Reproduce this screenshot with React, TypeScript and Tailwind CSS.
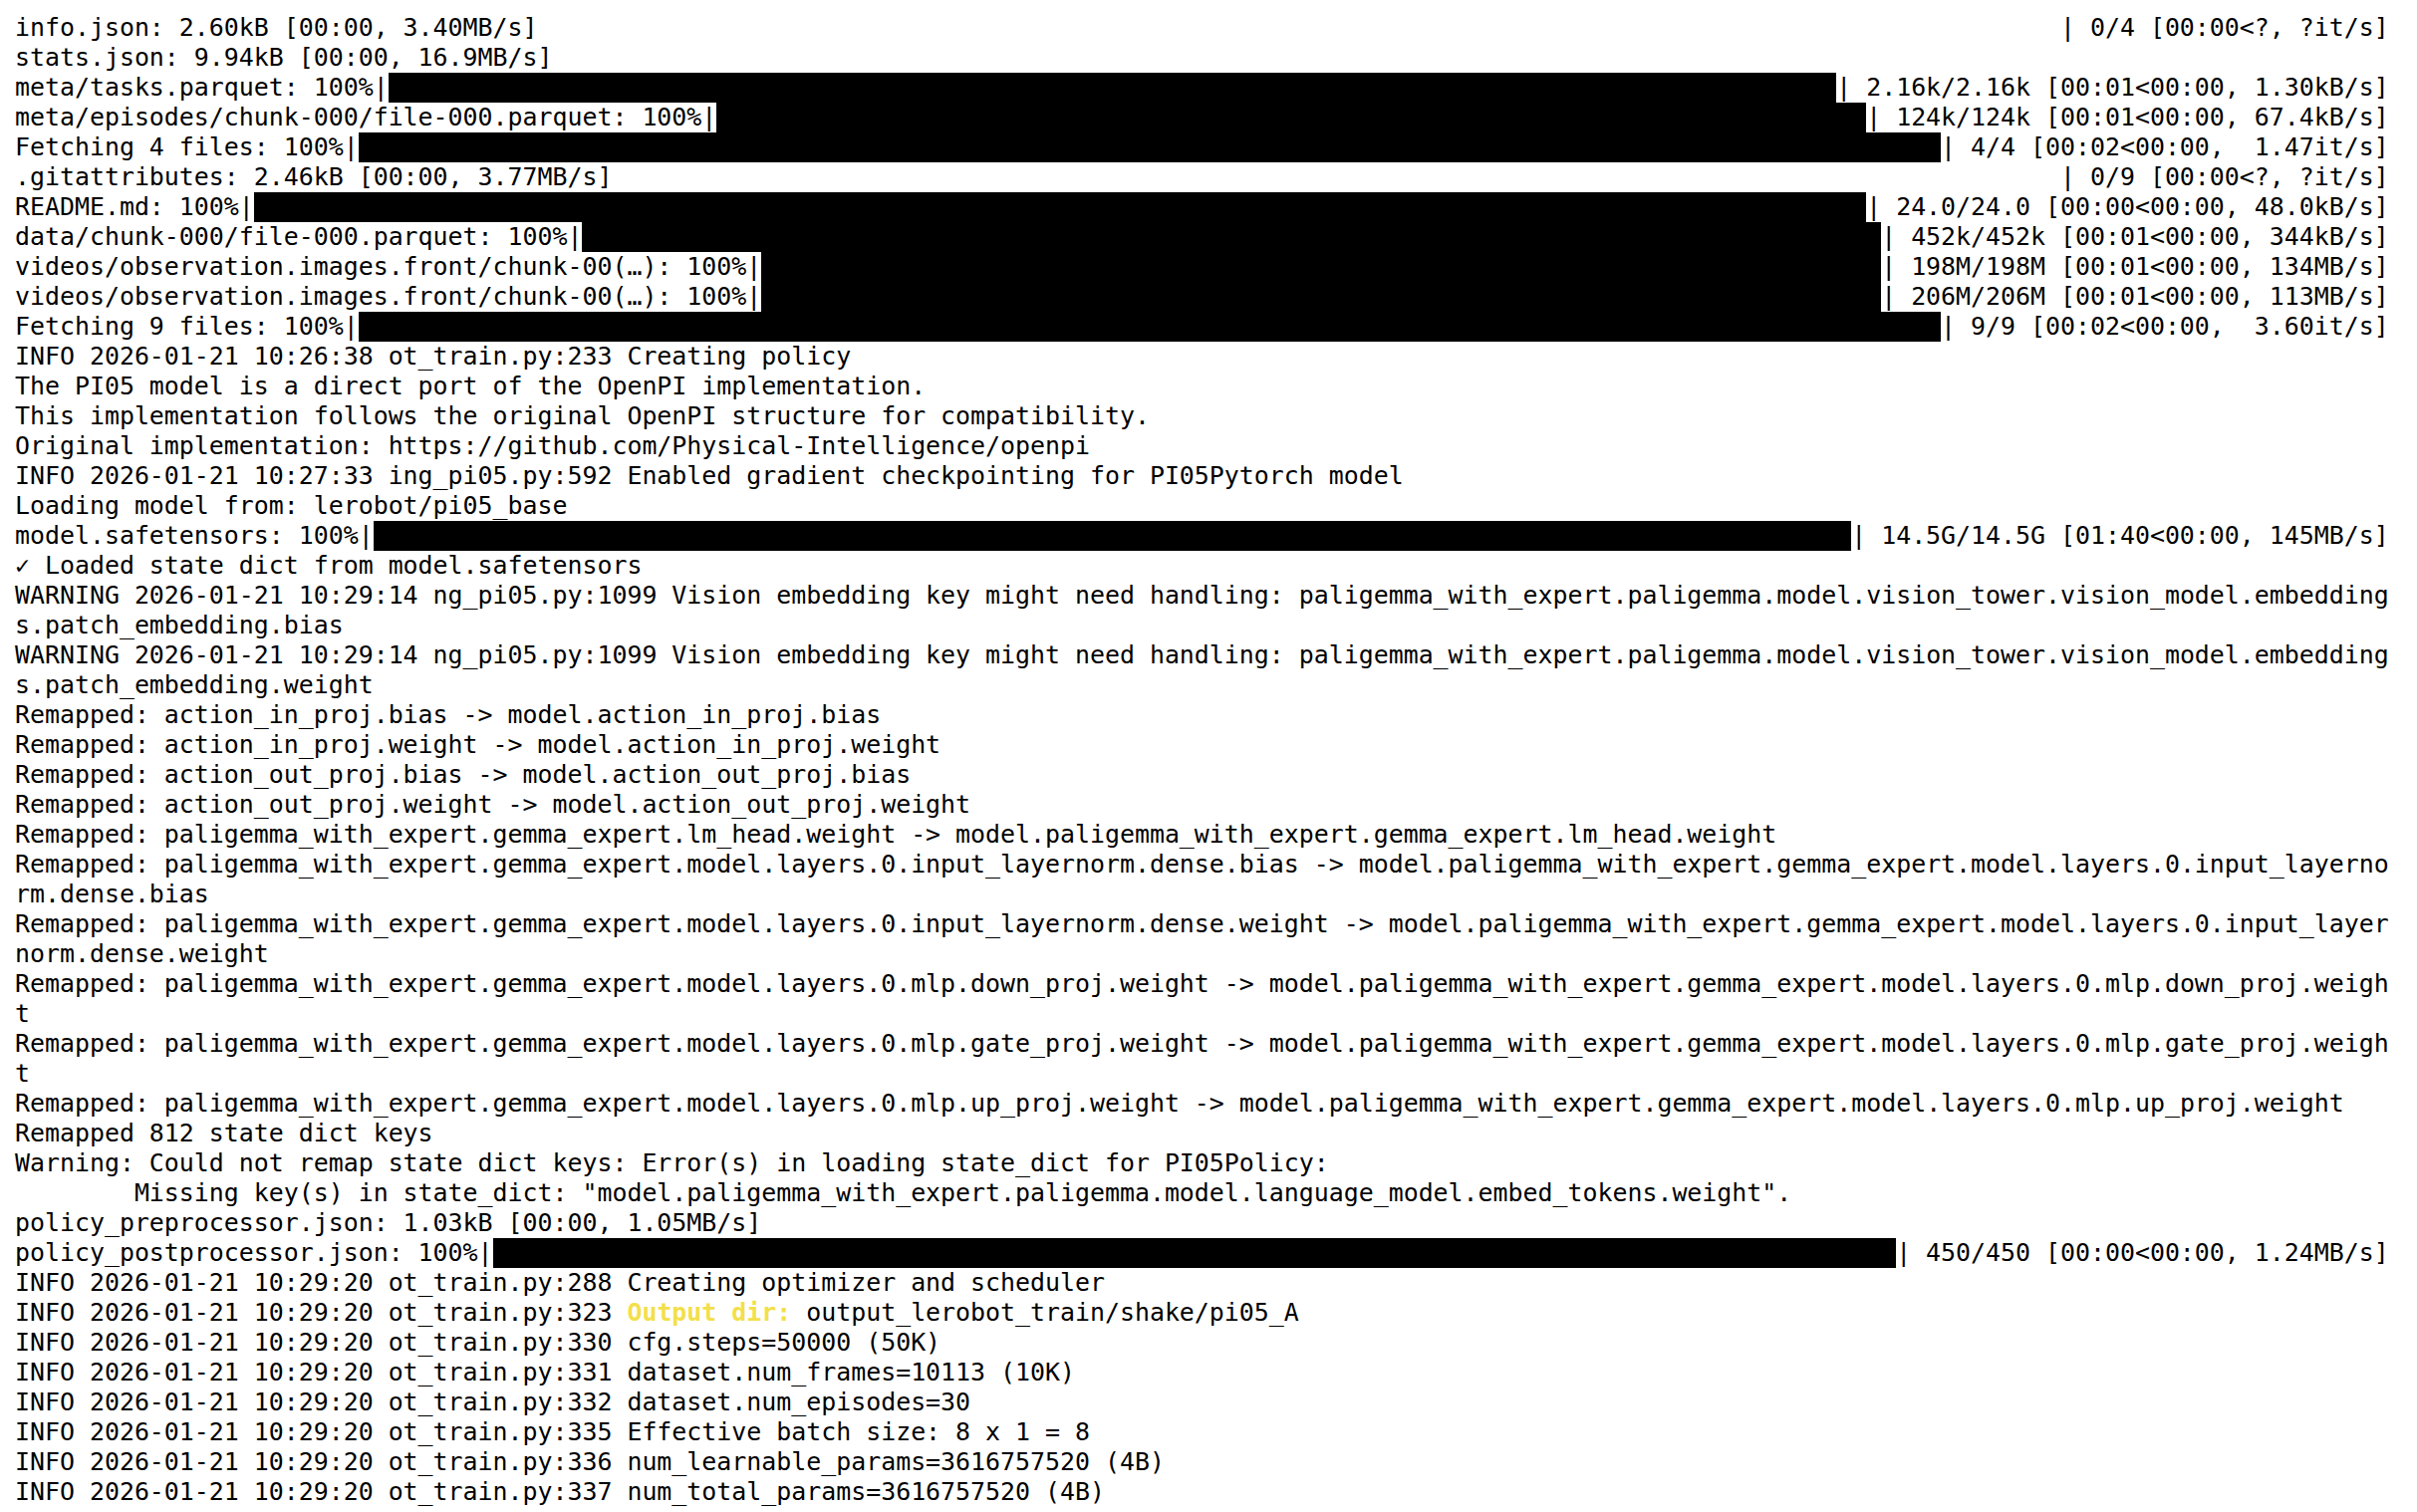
type Line =
  | { kind: 'text'; text: string }
  | { kind: 'split'; left: string; right: string }
  | { kind: 'bar'; prefix: string; suffix: string }
  | { kind: 'output'; prefix: string; label: string; rest: string };

const INFO_20 = 'INFO 2026-01-21 10:29:20 ot_train.py:';
const WARN = 'WARNING 2026-01-21 10:29:14 ng_pi05.py:1099 Vision embedding key might need handling: paligemma_with_expert.paligemma.model.vision_tower.vision_model.embedding';
const PGE = 'paligemma_with_expert.gemma_expert';
const VIDEO = 'videos/observation.images.front/chunk-00(…): 100%|';

const lines: Line[] = [
  { kind: 'split', left: 'info.json: 2.60kB [00:00, 3.40MB/s]', right: '| 0/4 [00:00<?, ?it/s]' },
  { kind: 'text', text: 'stats.json: 9.94kB [00:00, 16.9MB/s]' },
  { kind: 'bar', prefix: 'meta/tasks.parquet: 100%|', suffix: '| 2.16k/2.16k [00:01<00:00, 1.30kB/s]' },
  { kind: 'bar', prefix: 'meta/episodes/chunk-000/file-000.parquet: 100%|', suffix: '| 124k/124k [00:01<00:00, 67.4kB/s]' },
  { kind: 'bar', prefix: 'Fetching 4 files: 100%|', suffix: '| 4/4 [00:02<00:00,  1.47it/s]' },
  { kind: 'split', left: '.gitattributes: 2.46kB [00:00, 3.77MB/s]', right: '| 0/9 [00:00<?, ?it/s]' },
  { kind: 'bar', prefix: 'README.md: 100%|', suffix: '| 24.0/24.0 [00:00<00:00, 48.0kB/s]' },
  { kind: 'bar', prefix: 'data/chunk-000/file-000.parquet: 100%|', suffix: '| 452k/452k [00:01<00:00, 344kB/s]' },
  { kind: 'bar', prefix: VIDEO, suffix: '| 198M/198M [00:01<00:00, 134MB/s]' },
  { kind: 'bar', prefix: VIDEO, suffix: '| 206M/206M [00:01<00:00, 113MB/s]' },
  { kind: 'bar', prefix: 'Fetching 9 files: 100%|', suffix: '| 9/9 [00:02<00:00,  3.60it/s]' },
  { kind: 'text', text: 'INFO 2026-01-21 10:26:38 ot_train.py:233 Creating policy' },
  { kind: 'text', text: 'The PI05 model is a direct port of the OpenPI implementation.' },
  { kind: 'text', text: 'This implementation follows the original OpenPI structure for compatibility.' },
  { kind: 'text', text: 'Original implementation: https://github.com/Physical-Intelligence/openpi' },
  { kind: 'text', text: 'INFO 2026-01-21 10:27:33 ing_pi05.py:592 Enabled gradient checkpointing for PI05Pytorch model' },
  { kind: 'text', text: 'Loading model from: lerobot/pi05_base' },
  { kind: 'bar', prefix: 'model.safetensors: 100%|', suffix: '| 14.5G/14.5G [01:40<00:00, 145MB/s]' },
  { kind: 'text', text: '✓ Loaded state dict from model.safetensors' },
  { kind: 'text', text: WARN },
  { kind: 'text', text: 's.patch_embedding.bias' },
  { kind: 'text', text: WARN },
  { kind: 'text', text: 's.patch_embedding.weight' },
  { kind: 'text', text: 'Remapped: action_in_proj.bias -> model.action_in_proj.bias' },
  { kind: 'text', text: 'Remapped: action_in_proj.weight -> model.action_in_proj.weight' },
  { kind: 'text', text: 'Remapped: action_out_proj.bias -> model.action_out_proj.bias' },
  { kind: 'text', text: 'Remapped: action_out_proj.weight -> model.action_out_proj.weight' },
  { kind: 'text', text: `Remapped: ${PGE}.lm_head.weight -> model.${PGE}.lm_head.weight` },
  { kind: 'text', text: `Remapped: ${PGE}.model.layers.0.input_layernorm.dense.bias -> model.${PGE}.model.layers.0.input_layerno` },
  { kind: 'text', text: 'rm.dense.bias' },
  { kind: 'text', text: `Remapped: ${PGE}.model.layers.0.input_layernorm.dense.weight -> model.${PGE}.model.layers.0.input_layer` },
  { kind: 'text', text: 'norm.dense.weight' },
  { kind: 'text', text: `Remapped: ${PGE}.model.layers.0.mlp.down_proj.weight -> model.${PGE}.model.layers.0.mlp.down_proj.weigh` },
  { kind: 'text', text: 't' },
  { kind: 'text', text: `Remapped: ${PGE}.model.layers.0.mlp.gate_proj.weight -> model.${PGE}.model.layers.0.mlp.gate_proj.weigh` },
  { kind: 'text', text: 't' },
  { kind: 'text', text: `Remapped: ${PGE}.model.layers.0.mlp.up_proj.weight -> model.${PGE}.model.layers.0.mlp.up_proj.weight` },
  { kind: 'text', text: 'Remapped 812 state dict keys' },
  { kind: 'text', text: 'Warning: Could not remap state dict keys: Error(s) in loading state_dict for PI05Policy:' },
  { kind: 'text', text: '        Missing key(s) in state_dict: "model.paligemma_with_expert.paligemma.model.language_model.embed_tokens.weight".' },
  { kind: 'text', text: 'policy_preprocessor.json: 1.03kB [00:00, 1.05MB/s]' },
  { kind: 'bar', prefix: 'policy_postprocessor.json: 100%|', suffix: '| 450/450 [00:00<00:00, 1.24MB/s]' },
  { kind: 'text', text: `${INFO_20}288 Creating optimizer and scheduler` },
  { kind: 'output', prefix: `${INFO_20}323 `, label: 'Output dir:', rest: ' output_lerobot_train/shake/pi05_A' },
  { kind: 'text', text: `${INFO_20}330 cfg.steps=50000 (50K)` },
  { kind: 'text', text: `${INFO_20}331 dataset.num_frames=10113 (10K)` },
  { kind: 'text', text: `${INFO_20}332 dataset.num_episodes=30` },
  { kind: 'text', text: `${INFO_20}335 Effective batch size: 8 x 1 = 8` },
  { kind: 'text', text: `${INFO_20}336 num_learnable_params=3616757520 (4B)` },
  { kind: 'text', text: `${INFO_20}337 num_total_params=3616757520 (4B)` },
];

function Row({ line }: { line: Line }) {
  if (line.kind === 'bar') {
    return (
      <div className="flex h-[30px]">
        <span className="shrink-0">{line.prefix}</span>
        <span className="flex-1 bg-black" />
        <span className="shrink-0">{line.suffix}</span>
      </div>
    );
  }
  if (line.kind === 'split') {
    return (
      <div className="flex h-[30px] justify-between">
        <span>{line.left}</span>
        <span>{line.right}</span>
      </div>
    );
  }
  if (line.kind === 'output') {
    return (
      <div className="h-[30px]">
        {line.prefix}
        <span className="font-bold text-[#f3df4a]">{line.label}</span>
        {line.rest}
      </div>
    );
  }
  return <div className="h-[30px]">{line.text}</div>;
}

export default function App() {
  return (
    <div className="min-h-screen w-full bg-white pl-[15px] pt-[13px] text-black">
      <div className="w-[159ch] whitespace-pre font-['DejaVu_Sans_Mono',monospace] text-[24.9px] leading-[30px]">
        {lines.map((line, i) => (
          <Row key={i} line={line} />
        ))}
      </div>
    </div>
  );
}
